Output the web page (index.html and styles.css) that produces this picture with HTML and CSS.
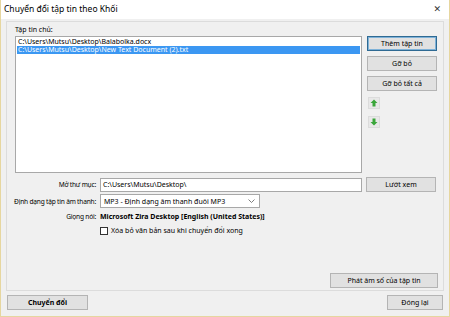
FILE: index.html
```html
<!DOCTYPE html>
<html lang="vi">
<head>
    <meta charset="UTF-8">
    <title>Chuyển đổi tập tin theo Khối</title>
    <link rel="stylesheet" href="styles.css">
</head>
<body>
    <div class="window">
        <div class="titlebar">
            <span class="title">Chuyển đổi tập tin theo Khối</span>
            <span class="close">&#x2715;</span>
        </div>
        <div class="dialog">
            <div class="group">
                <div class="top">
                    <div class="main">
                        <div class="caption">Tập tin chủ:</div>
                        <div class="listbox">
                            <div class="item">C:\Users\Mutsu\Desktop\Balabolka.docx</div>
                            <div class="item selected">C:\Users\Mutsu\Desktop\New Text Document (2).txt</div>
                        </div>
                    </div>
                    <div class="side">
                        <button class="btn focused">Thêm tập tin</button>
                        <button class="btn">Gỡ bỏ</button>
                        <button class="btn">Gỡ bỏ tất cả</button>
                        <button class="arrow">
                            <svg width="8" height="8" viewBox="0 0 8 8"><path d="M4 0.5 L7.5 4 L5.5 4 L5.5 7.5 L2.5 7.5 L2.5 4 L0.5 4 Z" fill="#3aa63a"/></svg>
                        </button>
                        <button class="arrow">
                            <svg width="8" height="8" viewBox="0 0 8 8"><path d="M4 7.5 L7.5 4 L5.5 4 L5.5 0.5 L2.5 0.5 L2.5 4 L0.5 4 Z" fill="#3aa63a"/></svg>
                        </button>
                    </div>
                </div>

                <div class="form">
                    <label class="lbl">Mở thư mục:</label>
                    <div class="textbox">C:\Users\Mutsu\Desktop\</div>
                    <button class="btn">Lướt xem</button>

                    <label class="lbl">Định dạng tập tin âm thanh:</label>
                    <div class="combo">
                        <span>MP3 - Định dạng âm thanh đuôi MP3</span>
                        <svg width="7" height="4" viewBox="0 0 7 4"><path d="M0.5 0.5 L3.5 3.5 L6.5 0.5" fill="none" stroke="#606060" stroke-width="0.8"/></svg>
                    </div>
                    <span></span>

                    <label class="lbl">Giọng nói:</label>
                    <div class="voice">Microsoft Zira Desktop [English (United States)]</div>
                    <span></span>

                    <span></span>
                    <div class="check"><span class="box"></span>Xóa bỏ văn bản sau khi chuyển đổi xong</div>
                    <span></span>
                </div>

                <div class="speak-row">
                    <button class="btn wide">Phát âm số của tập tin</button>
                </div>
            </div>

            <div class="footer">
                <button class="btn convert">Chuyển đổi</button>
                <button class="btn close-btn">Đóng lại</button>
            </div>
        </div>
    </div>
</body>
</html>
```

FILE: styles.css
```css
html, body {
    margin: 0;
    padding: 0;
}

body {
    width: 450px;
    height: 317px;
    font-family: "Noto Sans", "DejaVu Sans", sans-serif;
    font-size: 7px;
    color: #000;
    overflow: hidden;
}

.window {
    width: 450px;
    height: 317px;
    box-sizing: border-box;
    border: 1px solid #e6d69f;
    border-top: none;
    display: flex;
    flex-direction: column;
    background-color: #f0f0f0;
}

.titlebar {
    height: 17px;
    background-color: #fff;
    display: flex;
    align-items: center;
    justify-content: space-between;
    padding: 0 8px 2px 3px;
}

.title {
    font-size: 8.5px;
}

.close {
    font-size: 9px;
    color: #333;
}

.dialog {
    flex: 1;
    display: flex;
    flex-direction: column;
    padding: 2px 5px 4px 5px;
}

.group {
    border: 1px solid #dcdcdc;
    height: 270px;
    box-sizing: border-box;
    padding: 3px 5px 2px 8px;
    display: flex;
    flex-direction: column;
}

.top {
    display: flex;
    gap: 5px;
}

.main {
    width: 347px;
}

.caption {
    height: 11px;
    line-height: 10px;
}

.listbox {
    height: 137px;
    background-color: #fff;
    border: 1px solid #a8a8a8;
    box-sizing: border-box;
    padding: 1px 1px;
}

.item {
    height: 8px;
    line-height: 8px;
    padding-left: 1px;
    white-space: nowrap;
}

.item.selected {
    background-color: #3b97f2;
    color: #fff;
}

.side {
    width: 70px;
    display: flex;
    flex-direction: column;
    align-items: flex-start;
    padding-top: 11px;
    gap: 5px;
}

.btn {
    font-family: inherit;
    font-size: 7px;
    width: 70px;
    height: 15px;
    padding: 0;
    background-color: #e1e1e1;
    border: 1px solid #b4b4b4;
    color: #000;
    box-sizing: border-box;
}

.btn.focused {
    border: 1px solid #2f6a93;
    box-shadow: inset 0 0 0 1px #7fb2d8;
}

.arrow {
    width: 12px;
    height: 12px;
    padding: 0;
    margin-top: 1px;
    margin-left: 1px;
    border: 1px solid #dcdcdc;
    background-color: #e8e8e8;
    display: flex;
    align-items: center;
    justify-content: center;
    box-sizing: border-box;
}

.arrow + .arrow {
    margin-top: 2px;
}

.form {
    display: grid;
    grid-template-columns: 81px 262px 70px;
    column-gap: 4px;
    row-gap: 2px;
    margin-top: 4px;
    align-items: center;
}

.lbl {
    justify-self: end;
    text-align: right;
    white-space: nowrap;
    font-size: 6.6px;
    letter-spacing: -0.2px;
}

.textbox {
    height: 14px;
    line-height: 12px;
    background-color: #fff;
    border: 1px solid #a8a8a8;
    box-sizing: border-box;
    padding-left: 2px;
}

.combo {
    width: 160px;
    height: 14px;
    background-color: #fff;
    border: 1px solid #a8a8a8;
    box-sizing: border-box;
    padding: 0 4px 0 3px;
    display: flex;
    align-items: center;
    justify-content: space-between;
}

.voice {
    font-weight: bold;
    height: 12px;
    line-height: 12px;
    margin-top: 1px;
    white-space: nowrap;
}

.check {
    display: flex;
    align-items: center;
    gap: 3px;
    margin-top: 1px;
    white-space: nowrap;
}

.box {
    width: 8px;
    height: 8px;
    border: 1px solid #333;
    background-color: #fff;
    box-sizing: border-box;
}

.speak-row {
    margin-top: auto;
    display: flex;
    justify-content: flex-end;
}

.btn.wide {
    width: 108px;
}

.footer {
    display: flex;
    justify-content: space-between;
    margin-top: 4px;
    padding: 0 1px 0 1px;
}

.btn.convert {
    width: 81px;
    font-weight: bold;
}

.btn.close-btn {
    width: 56px;
}
```
